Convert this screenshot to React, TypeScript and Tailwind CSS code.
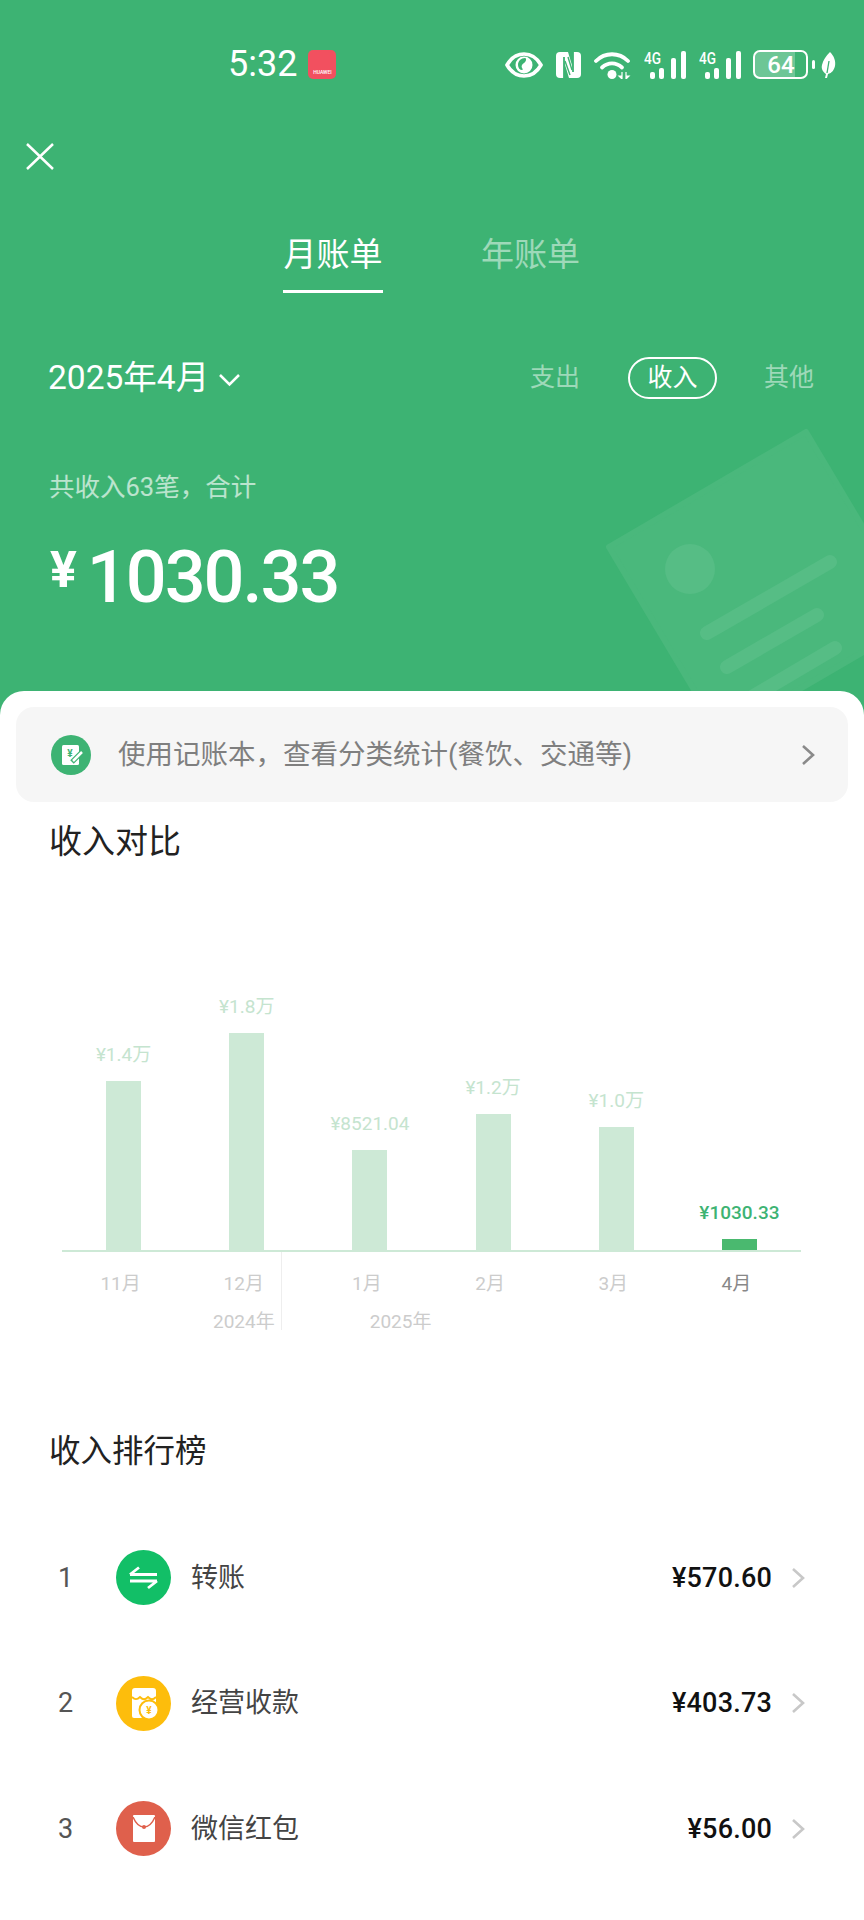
const font = 'font-["Roboto","Noto_Sans_CJK_SC",sans-serif]';

const bars = [
  { month: '11月', label: '¥1.4万', height: 'h-[169px]' },
  { month: '12月', label: '¥1.8万', height: 'h-[217px]' },
  { month: '1月', label: '¥8521.04', height: 'h-[100px]' },
  { month: '2月', label: '¥1.2万', height: 'h-[136px]' },
  { month: '3月', label: '¥1.0万', height: 'h-[123px]' },
  { month: '4月', label: '¥1030.33', height: 'h-[11px]', active: true },
];

function Eye() {
  return (
    <svg width="38" height="26" viewBox="0 0 38 26">
      <path d="M2 13C6.500 5 12 2 19 2s12.500 3 17 11c-4.500 8-10 11-17 11S6.500 21 2 13Z" fill="none" stroke="white" strokeWidth="3.600" />
      <circle cx="19" cy="13" r="8.500" fill="white" />
      <path d="M20 6c-4 0-7 3-7 7 0 3 2 5 4 5 1 0 1-1 0-2-1-2 0-4 2-5 2-1 3-5 1-5Z" fill="#3db373" />
    </svg>
  );
}

function Nfc() {
  return (
    <svg width="27" height="28" viewBox="0 0 27 28">
      <path d="M1 5a4 4 0 0 1 4-4h4v26H5a4 4 0 0 1-4-4Z" fill="white" />
      <path d="M26 5a4 4 0 0 0-4-4h-4v26h4a4 4 0 0 0 4-4Z" fill="white" />
      <path d="M8 1h5l6 20v6h-5L8 7Z" fill="white" />
      <path d="M10 10l5 14M13 6l4 13" stroke="#3db373" strokeWidth="1.400" fill="none" />
      <path d="M9 6v21M18 1v20" stroke="#3db373" strokeWidth="1.800" fill="none" />
    </svg>
  );
}

function Wifi() {
  return (
    <svg width="38" height="28" viewBox="0 0 38 28">
      <path d="M2 10C11 1 25 1 34 10" fill="none" stroke="white" strokeWidth="3.800" strokeLinecap="round" />
      <path d="M8 16.500c6-5.500 14-5.500 20 0" fill="none" stroke="white" strokeWidth="3.800" strokeLinecap="round" />
      <circle cx="18" cy="23.500" r="4.500" fill="white" />
      <path d="M28 21v7l-3-3h3M32 21v7l3-3h-3" fill="white" stroke="white" strokeWidth="1.200" />
    </svg>
  );
}

function Signal() {
  return (
    <div className="relative h-[28px] w-[43px]">
      <span className="absolute left-0 top-[-2px] origin-left scale-x-[0.8] text-[17px] leading-[18px] font-medium text-white">4G</span>
      <div className="absolute left-[6px] bottom-0 h-[7px] w-[5px] rounded-[2px] bg-white" />
      <div className="absolute left-[15px] bottom-0 h-[11px] w-[5px] rounded-[2px] bg-white" />
      <div className="absolute left-[27px] bottom-0 h-[21px] w-[5px] rounded-[2px] bg-white" />
      <div className="absolute left-[37px] bottom-0 h-[28px] w-[5px] rounded-[2px] bg-white" />
    </div>
  );
}

function Leaf() {
  return (
    <svg width="15" height="26" viewBox="0 0 15 26">
      <path d="M9 0c4 4 6 9 5 14-1 4-3 7-7 8l-1 4H4l1-4C2 20 0 17 1 13 2 8 5 4 9 0Z" fill="white" />
      <path d="M8 9 6 21" stroke="#3db373" strokeWidth="1.300" />
    </svg>
  );
}

function BookIcon() {
  return (
    <svg width="40" height="40" viewBox="0 0 40 40">
      <circle cx="20" cy="20" r="20" fill="#3db373" />
      <rect x="11" y="10" width="17" height="20" rx="1.500" fill="white" />
      <text x="19" y="22" textAnchor="middle" fontSize="10" fontWeight="700" fill="#3db373" fontFamily="Roboto">¥</text>
      <path d="M21 27l10-10" stroke="#3db373" strokeWidth="5" />
      <path d="M22 26l9-9" stroke="white" strokeWidth="2.500" />
    </svg>
  );
}

function TransferIcon() {
  return (
    <svg width="55" height="55" viewBox="0 0 55 55">
      <circle cx="27.500" cy="27.500" r="27.500" fill="#12bf67" />
      <path d="M14 24.500h27M14 24.500l9-7M41 31H14M41 31l-9 7" fill="none" stroke="white" strokeWidth="2.800" />
    </svg>
  );
}

function ShopIcon() {
  return (
    <svg width="55" height="55" viewBox="0 0 55 55">
      <circle cx="27.500" cy="27.500" r="27.500" fill="#fdbd0c" />
      <path d="M16 15a3 3 0 0 1 3-3h18a3 3 0 0 1 3 3v25a2 2 0 0 1-2 2H18a2 2 0 0 1-2-2Z" fill="white" />
      <path d="M16 21c3 3 5 3 8 0 3 3 5 3 8 0 3 3 5 3 8 0" fill="none" stroke="#fdbd0c" strokeWidth="1.800" />
      <circle cx="33" cy="34" r="9.500" fill="white" stroke="#fdbd0c" strokeWidth="2" />
      <text x="33" y="38" textAnchor="middle" fontSize="10" fontWeight="700" fill="#fdbd0c" fontFamily="Roboto">¥</text>
    </svg>
  );
}

function PacketIcon() {
  return (
    <svg width="55" height="55" viewBox="0 0 55 55">
      <circle cx="27.500" cy="27.500" r="27.500" fill="#df604c" />
      <rect x="17" y="14" width="22" height="27" rx="1" fill="white" />
      <path d="M17 16c3 7 7 10 11 10s8-3 11-10" fill="none" stroke="#df604c" strokeWidth="1.500" />
      <circle cx="28" cy="26" r="2" fill="#df604c" />
    </svg>
  );
}

function Chevron({ className }: { className: string }) {
  return (
    <svg className={className} viewBox="0 0 14 22" fill="none" stroke="currentColor" strokeWidth="2.600">
      <path d="M2 2l10 9-10 9" />
    </svg>
  );
}

const ranks = [
  { no: 1, name: '转账', amount: '¥570.60', icon: <TransferIcon /> },
  { no: 2, name: '经营收款', amount: '¥403.73', icon: <ShopIcon /> },
  { no: 3, name: '微信红包', amount: '¥56.00', icon: <PacketIcon /> },
];

export default function App() {
  return (
    <div className={`h-[1920px] w-[864px] overflow-hidden bg-white ${font}`}>
      <section className="relative h-[716px] overflow-hidden bg-[#3db373] text-white">
        <svg className="absolute left-0 top-0" width="864" height="716" viewBox="0 0 864 716">
          <path d="M609 547 806 432 918 620 721 735Z" fill="#4ab87c" stroke="#4ab87c" strokeWidth="6" strokeLinejoin="round" />
          <circle cx="690" cy="569" r="25" fill="#56bd85" />
          <path d="M707 633 830 562M727 667 817 615M752 697 835 648" stroke="#56bd85" strokeWidth="14" strokeLinecap="round" />
        </svg>

        <div className="relative mt-[50px] flex h-[29px] items-center pl-[228px]">
          <span className="text-[36px] leading-[29px]">5:32</span>
          <div className="ml-[11px] flex h-[29px] w-[28px] flex-col items-center justify-end rounded-[5px] bg-[#f2505f] pb-[4px]">
            <span className="text-[5px] leading-[6px] font-medium">HUAWEI</span>
          </div>
          <div className="ml-[169px] flex items-center gap-[12px]">
            <Eye />
            <Nfc />
            <Wifi />
            <Signal />
            <Signal />
            <div className="ml-[-1px] flex items-center">
              <div className="relative flex h-[29px] w-[55px] items-center justify-center rounded-[7px] border-[2.500px] border-white text-[24px] leading-[24px] font-medium">
                <div className="absolute inset-y-0 left-0 w-[40px] rounded-l-[4px] bg-white/25" />
                <span className="relative">64</span>
              </div>
              <div className="ml-[4px] h-[9px] w-[3px] rounded-full bg-white" />
              <div className="ml-[6px]">
                <Leaf />
              </div>
            </div>
          </div>
        </div>

        <svg className="relative ml-[26px] mt-[64px]" width="28" height="27" viewBox="0 0 28 27" fill="none" stroke="white" strokeWidth="2.500">
          <path d="M1 1l26 25M27 1 1 26" />
        </svg>

        <div className="relative mt-[69px] flex h-[56px] gap-[98px] pl-[283px] text-[33px] leading-[32px]">
          <div className="h-[54px] w-[100px] border-b-[3px] border-white text-center">月账单</div>
          <div className="text-white/50">年账单</div>
        </div>

        <div className="relative mt-[62px] flex h-[42px] items-center pl-[48px] pr-[50px]">
          <span className="text-[33.500px] leading-none">2025年4月</span>
          <svg className="ml-[9px] mt-[4px]" width="23" height="14" viewBox="0 0 23 14" fill="none" stroke="white" strokeWidth="2.500">
            <path d="M2 2l9.500 9.500L21 2" />
          </svg>
          <div className="ml-auto flex items-center text-[25px]">
            <span className="text-white/50">支出</span>
            <span className="ml-[48px] flex h-[42px] w-[89px] items-center justify-center rounded-full border-2 border-white">收入</span>
            <span className="ml-[47px] text-white/50">其他</span>
          </div>
        </div>

        <p className="relative ml-[49px] mt-[70px] text-[25.500px] leading-[36px] text-white/65">共收入63笔，合计</p>

        <div className="relative ml-[50px] mt-[33px] flex items-start">
          <span className="mt-[7px] text-[50px] leading-[50px] font-bold">¥</span>
          <span className="ml-[10px] text-[72px] leading-[80px] font-medium tracking-[-2px]">1030.33</span>
        </div>
      </section>

      <main className="relative -mt-[25px] rounded-t-[24px] bg-white pt-[16px]">
        <div className="mx-[16px] flex h-[95px] items-center rounded-[18px] bg-[#f6f6f6] pl-[35px] pr-[33px]">
          <BookIcon />
          <span className="ml-[27px] text-[27.500px] text-[#7f7f7f]">使用记账本，查看分类统计(餐饮、交通等)</span>
          <Chevron className="ml-auto h-[22px] w-[14px] text-[#8a8a8a]" />
        </div>

        <h2 className="ml-[49px] mt-[20px] text-[33px] leading-[40px] text-[#222222]">收入对比</h2>

        <div className="ml-[62px] mt-[117px] w-[739px]">
          <div className="grid h-[273px] grid-cols-6 items-end border-b-2 border-[#cde9d6]">
            {bars.map((bar) => (
              <div key={bar.month} className="flex flex-col items-center">
                <span className={`mb-[14px] whitespace-nowrap text-[19px] leading-[24px] ${bar.active ? 'font-medium text-[#3db373]' : 'text-[#c5e4cf]'}`}>{bar.label}</span>
                <div className={`w-[35px] ${bar.height} ${bar.active ? 'bg-[#4ab96f]' : 'bg-[#cde9d6]'}`} />
              </div>
            ))}
          </div>
          <div className="relative">
            <div className="absolute left-[219px] top-0 h-[78px] w-px bg-[#eeeeee]" />
            <div className="grid grid-cols-6 pt-[20px]">
              {bars.map((bar) => (
                <span key={bar.month} className={`pr-[6px] text-center text-[19px] leading-[24px] ${bar.active ? 'text-[#888888]' : 'text-[#cccccc]'}`}>{bar.month}</span>
              ))}
            </div>
            <div className="mt-[14px] flex pl-[151px] text-[19px] leading-[24px] text-[#cccccc]">
              <span>2024年</span>
              <span className="ml-[95px]">2025年</span>
            </div>
          </div>
        </div>

        <h2 className="ml-[49px] mt-[98px] text-[31.500px] leading-[40px] text-[#222222]">收入排行榜</h2>

        <ul className="mt-[43px]">
          {ranks.map((row) => (
            <li key={row.no} className="flex h-[125.500px] items-center pl-[58px] pr-[59px]">
              <span className="w-[58px] text-[27px] text-[#555555]">{row.no}</span>
              {row.icon}
              <span className="ml-[20px] text-[27px] text-[#444444]">{row.name}</span>
              <span className="ml-auto text-[27px] font-medium tracking-[0.200px] text-[#111111]">{row.amount}</span>
              <Chevron className="ml-[19px] h-[22px] w-[14px] text-[#c8c8c8]" />
            </li>
          ))}
        </ul>
      </main>
    </div>
  );
}
